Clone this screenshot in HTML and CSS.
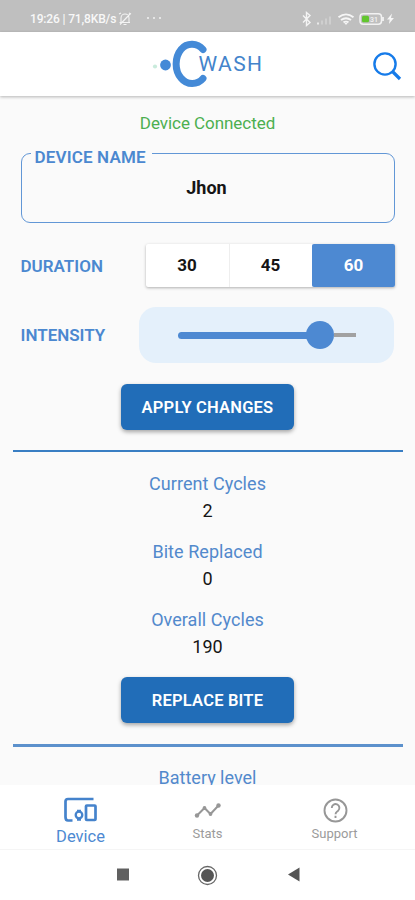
FILE: index.html
```html
<!DOCTYPE html>
<html lang="en">
<head>
<meta charset="utf-8">
<title>C Wash</title>
<link rel="stylesheet" href="styles.css">
</head>
<body>
<div class="status">
  <span class="status-text">19:26 | 71,8KB/s</span>
  <svg class="bell" width="14" height="14" viewBox="0 0 14 14" fill="none" stroke="#f4f4f4" stroke-width="1.1"><path d="M3 10.5V6a4 4 0 0 1 8 0v4.500M1.500 10.500H12M5.500 12.500h3M1 2l2-1M11 1l2 1M2 12.500L12.500 1.500"/></svg>
  <span class="more"><i></i><i></i><i></i></span>
  <svg class="signals" width="96" height="16" viewBox="0 0 96 16" fill="none">
    <path d="M3 4.500l7 7-3.500 3V1.500l3.500 3-7 7" stroke="#f4f4f4" stroke-width="1.400"/>
    <path d="M17 11.500h2v2h-2z" fill="#e9e9e9"/><path d="M21 9.500h2v4h-2zM25 7.500h2v6h-2zM29 5.500h2v8h-2z" fill="#cfcfcf"/>
    <path d="M38.500 6.200q7.500-5.600 15 0M41 9q5-3.600 10 0M43.500 11.400q2.500-1.600 5 0" stroke="#f6f6f6" stroke-width="1.900"/><path d="M44.500 12h3L46 14z" fill="#f6f6f6"/>
    <rect x="60" y="2.700" width="21.500" height="10.600" rx="3.200" stroke="#f2f2f2" stroke-width="1.500"/><path d="M83 6v4" stroke="#f2f2f2" stroke-width="1.800"/>
    <rect x="62" y="4.700" width="7" height="6.600" rx="1.500" fill="#62c62f"/>
    <text x="70" y="11" class="charge">31</text>
    <path d="M92 2.500l-5 6h2.700l-.8 4.500 5-6h-2.900z" fill="#f6f6f6"/>
  </svg>
</div>
<header class="header">
  <svg class="logo" width="114" height="52" viewBox="0 0 114 52">
    <circle cx="5" cy="28.500" r="2.100" fill="#c9ebdc"/><circle cx="15.500" cy="27" r="5.400" fill="#448ad7"/>
    <path d="M53 11.500C47.500 5 37 4.300 31 11.500C24.500 19.500 24.500 32.500 31 40C37 47.500 47.500 47 53 40.500" fill="none" stroke="#448ad7" stroke-width="7" stroke-linecap="round"/>
    <text x="48.500" y="33" class="brand" textLength="63.500" lengthAdjust="spacing">WASH</text>
  </svg>
  <svg class="search" width="30" height="30" viewBox="0 0 30 30" fill="none" stroke="#167be9"><circle cx="13" cy="12" r="10.600" stroke-width="2.400"/><path d="M20.500 19.500l7.500 7.500" stroke-width="3.200"/></svg>
</header>
<main class="main">
  <p class="connected">Device Connected</p>
  <section class="name-box"><span class="legend">DEVICE NAME</span><strong>Jhon</strong></section>
  <section class="row duration"><span class="label">DURATION</span>
    <div class="segments"><span>30</span><span>45</span><span class="selected">60</span></div>
  </section>
  <section class="row intensity"><span class="label">INTENSITY</span>
    <div class="slider"><span class="filled"></span><span class="thumb"></span><span class="rest"></span></div>
  </section>
  <button class="button">APPLY CHANGES</button>
  <hr>
  <dl class="stats">
    <dt>Current Cycles</dt><dd>2</dd>
    <dt>Bite Replaced</dt><dd>0</dd>
    <dt>Overall Cycles</dt><dd>190</dd>
  </dl>
  <button class="button replace">REPLACE BITE</button>
  <hr class="second">
  <p class="battery">Battery level</p>
</main>
<nav class="tabs">
  <a class="tab active">
    <svg width="36" height="26" viewBox="0 0 36 26" fill="none" stroke="#4583cc" stroke-width="2.700"><path d="M30.500 2H5Q2.500 2 2.500 4.500V20Q2.500 23.500 5 23.500H9.500"/><rect x="23" y="8.500" width="9.500" height="14.500" rx=".8"/><circle cx="16" cy="18" r="3.300" stroke-width="2.300"/><path d="M14 14h4M14 22.500h4" stroke-width="2.500"/></svg>
    <span>Device</span>
  </a>
  <a class="tab">
    <svg width="28" height="26" viewBox="0 0 28 26" fill="none" stroke="#979797" stroke-width="2"><path d="M3 18.500L10.500 11 16.500 17 24.500 8.500"/><g fill="#979797" stroke="none"><circle cx="3" cy="18.500" r="2.200"/><circle cx="10.500" cy="11" r="1.900"/><circle cx="16.500" cy="17" r="1.900"/><circle cx="24.500" cy="8.500" r="2.200"/></g></svg>
    <span>Stats</span>
  </a>
  <a class="tab">
    <svg width="26" height="26" viewBox="0 0 26 26" fill="none" stroke="#979797" stroke-width="1.900"><circle cx="13.500" cy="13.500" r="11"/><path d="M9.800 11a3.800 3.800 0 1 1 6.300 2.700C14.500 14.900 13.500 15.500 13.500 17.200M13.500 18.800v2.200"/></svg>
    <span>Support</span>
  </a>
</nav>
<footer class="system">
  <svg width="415" height="50" viewBox="0 0 415 50"><path d="M117 18.500h12v12h-12z" fill="#606060"/><circle cx="207.500" cy="25.500" r="9" fill="none" stroke="#666" stroke-width="1.300"/><circle cx="207.500" cy="25.500" r="6.500" fill="#555"/><path d="M288 24.500l11.500-7v14z" fill="#555"/></svg>
</footer>
</body>
</html>
```
FILE: styles.css
```css
* { box-sizing: border-box; }
body { margin: 0; width: 415px; height: 900px; overflow: hidden; display: flex; flex-direction: column; background: #fff; font-family: Roboto, sans-serif; color: #151515; }
p, dl, dd { margin: 0; }
svg { display: block; flex: none; }
.status { height: 32px; flex: none; background: #bfbfbf; display: flex; align-items: center; padding: 6px 19px 0 30px; color: #f8f8f8; }
.status-text { font-size: 12px; font-weight: 500; width: 88px; white-space: nowrap; letter-spacing: -.15px; }
.more { display: flex; gap: 4px; margin: -2px 0 0 15px; }
.more i { width: 2px; height: 2px; border-radius: 50%; background: #f2f2f2; }
.signals { margin-left: auto; }
.charge { font: 500 7px Roboto, sans-serif; fill: #f4f4f4; }
.header { height: 64px; flex: none; background: #fff; display: flex; align-items: center; justify-content: space-between; padding: 0 13px 0 150px; box-shadow: 0 1px 3px rgba(0,0,0,.28); z-index: 1; }
.search { margin-top: 5px; }
.brand { font: 400 21px Roboto, sans-serif; fill: #4384cb; }
.main { height: 689px; flex: none; overflow: hidden; background: #fafafa; display: flex; flex-direction: column; align-items: center; padding-top: 17px; }
.main > * { flex: none; }
.connected { height: 20px; line-height: 20px; font-size: 17px; letter-spacing: -.05px; color: #4caf50; }
.name-box { position: relative; width: 374px; height: 70px; margin-top: 20px; border: 1.500px solid #6297d6; border-radius: 9px; text-align: center; line-height: 67px; font-size: 18px; }
.name-box strong { position: relative; left: -1px; font-weight: 700; }
.legend { position: absolute; left: 9px; top: -8px; width: 121px; padding-left: 4px; height: 22px; line-height: 22px; background: #fafafa; color: #4b88d0; font-size: 17px; font-weight: 600; letter-spacing: .15px; text-align: left; white-space: nowrap; }
.row { width: 374px; display: flex; align-items: center; justify-content: space-between; }
.label { color: #4b88d0; font-size: 17px; font-weight: 600; }
.duration { height: 43px; margin-top: 21px; }
.segments { width: 249px; height: 43px; display: grid; grid-template-columns: repeat(3, 1fr); background: #fff; border-radius: 2px; box-shadow: 0 1px 3px rgba(0,0,0,.3); font-size: 17px; font-weight: 700; line-height: 43px; text-align: center; }
.segments span + span { border-left: 1px solid #eee; }
.segments .selected { background: #4d89d2; color: #fff; border-radius: 2px; border-color: #4d89d2; }
.intensity { height: 56px; margin-top: 20px; }
.slider { width: 255px; height: 56px; margin-right: 1px; background: #e4f0fb; border-radius: 17px; display: flex; align-items: center; padding: 0 38px 0 39px; }
.filled { width: 131px; height: 7px; border-radius: 4px 0 0 4px; background: #4d89d2; margin-right: -3px; }
.thumb { width: 28px; height: 28px; border-radius: 50%; background: #4d89d2; }
.rest { flex: 1; height: 4px; background: #a1a1a1; }
.button { width: 173px; height: 46px; margin-top: 21px; padding: 0; border: 0; border-radius: 6px; background: #216db8; color: #fff; font: 600 16.500px Roboto, sans-serif; letter-spacing: .2px; box-shadow: 0 2px 4px rgba(0,0,0,.35); }
hr { width: 390px; height: 2px; margin: 20px 0 0; border: 0; background: #397ec3; }
.stats { margin-top: 19px; text-align: center; font-size: 18px; }
.stats dt { height: 26px; line-height: 26px; color: #5289cc; letter-spacing: .05px; }
.stats dd { height: 27px; line-height: 27px; margin-bottom: 15px; }
.stats dd:last-child { margin: 0; }
.replace { margin-top: 17px; }
.second { background: #5c91cc; height: 3px; margin-top: 21px; }
.battery { margin-top: 18px; height: 26px; line-height: 26px; font-size: 18px; color: #5289cc; }
.tabs { height: 65px; flex: none; display: grid; grid-template-columns: 161px 93px 161px; border-bottom: 1px solid #f5f5f5; }
.tab { display: flex; flex-direction: column; align-items: center; padding-top: 12px; color: #9b9b9b; font-size: 13px; }
.tab span { line-height: 20px; margin-top: 1px; }
.active { color: #4d89d2; font-size: 16.500px; }
.active span { margin-top: 4px; }
.system { height: 50px; flex: none; }
```
